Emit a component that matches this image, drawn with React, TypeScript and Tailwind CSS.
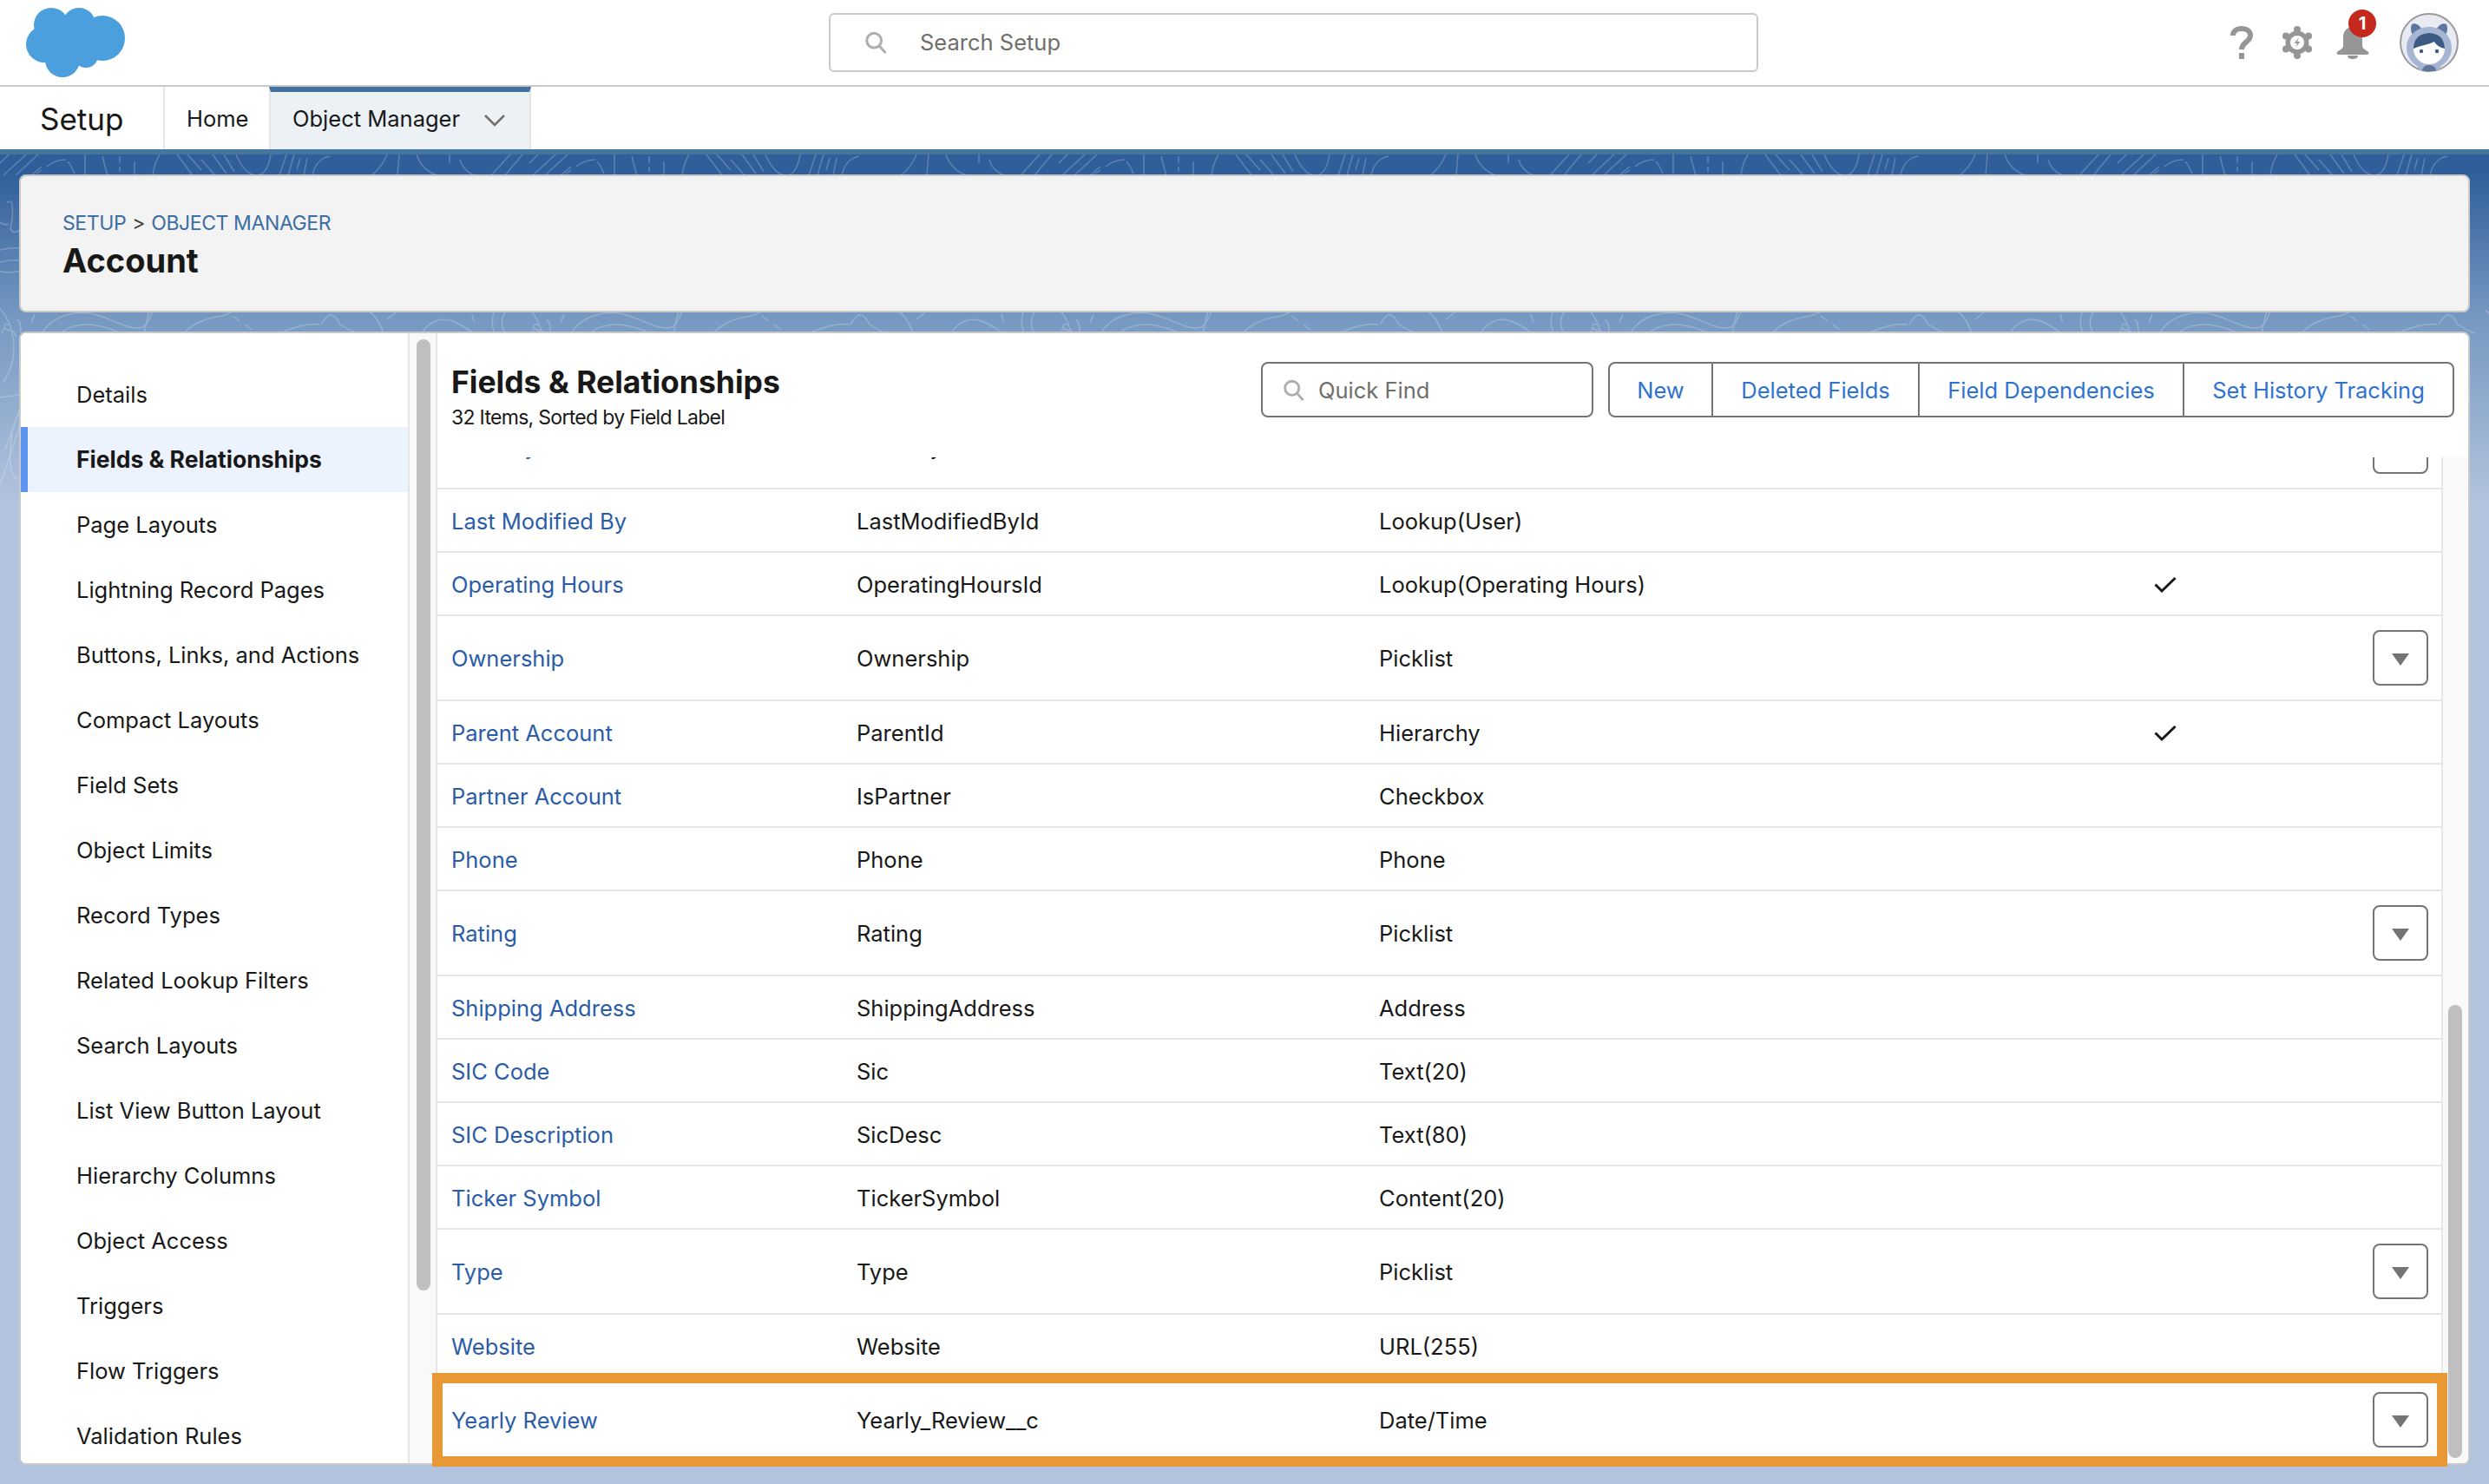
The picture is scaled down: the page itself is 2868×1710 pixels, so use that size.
import React from 'react';

const sideItems = [
  'Details',
  'Fields & Relationships',
  'Page Layouts',
  'Lightning Record Pages',
  'Buttons, Links, and Actions',
  'Compact Layouts',
  'Field Sets',
  'Object Limits',
  'Record Types',
  'Related Lookup Filters',
  'Search Layouts',
  'List View Button Layout',
  'Hierarchy Columns',
  'Object Access',
  'Triggers',
  'Flow Triggers',
  'Validation Rules',
];

type Row = { label: string; api: string; type: string; check?: boolean; menu?: boolean };

const rows: Row[] = [
  { label: 'Last Modified By', api: 'LastModifiedById', type: 'Lookup(User)' },
  { label: 'Operating Hours', api: 'OperatingHoursId', type: 'Lookup(Operating Hours)', check: true },
  { label: 'Ownership', api: 'Ownership', type: 'Picklist', menu: true },
  { label: 'Parent Account', api: 'ParentId', type: 'Hierarchy', check: true },
  { label: 'Partner Account', api: 'IsPartner', type: 'Checkbox' },
  { label: 'Phone', api: 'Phone', type: 'Phone' },
  { label: 'Rating', api: 'Rating', type: 'Picklist', menu: true },
  { label: 'Shipping Address', api: 'ShippingAddress', type: 'Address' },
  { label: 'SIC Code', api: 'Sic', type: 'Text(20)' },
  { label: 'SIC Description', api: 'SicDesc', type: 'Text(80)' },
  { label: 'Ticker Symbol', api: 'TickerSymbol', type: 'Content(20)' },
  { label: 'Type', api: 'Type', type: 'Picklist', menu: true },
  { label: 'Website', api: 'Website', type: 'URL(255)' },
  { label: 'Yearly Review', api: 'Yearly_Review__c', type: 'Date/Time', menu: true },
];

const SearchGlyph = ({ className }: { className: string }) => (
  <svg viewBox="0 0 28 28" className={className} fill="none" stroke="#b0adab" strokeWidth="3.2">
    <circle cx="12" cy="11.5" r="9" />
    <path d="M18.5 18l7 8" strokeLinecap="round" />
  </svg>
);

const MenuButton = () => (
  <div className="w-[64px] h-[64px] rounded-[8px] border-2 border-[#747474] bg-white flex items-center justify-center pt-[3px]">
    <svg viewBox="0 0 20 14" className="w-[20px] h-[14px]">
      <path d="M0 0h20L10 14z" fill="#747474" />
    </svg>
  </div>
);

const TableRow = ({ row, className = '' }: { row: Row; className?: string }) => (
  <div className={`flex items-center shrink-0 border-b-2 border-[#e5e5e5] pl-[16px] ${row.menu ? 'h-[98px]' : 'h-[73px]'} ${className}`}>
    <div className="w-[467px] pt-[3px] text-[#2a5ca8]">{row.label}</div>
    <div className="w-[602px] pt-[3px]">{row.api}</div>
    <div className="w-[893px] pt-[3px]">{row.type}</div>
    <div className="w-[252px]">
      {row.check && (
        <svg viewBox="0 0 26 20" className="w-[26px] h-[20px] mt-[3px]" fill="none" stroke="#181818" strokeWidth="3">
          <path d="M1.500 9.500l7.500 7.500L24.500 2" />
        </svg>
      )}
    </div>
    {row.menu && <MenuButton />}
  </div>
);

// contour lines behind the cards, they only show in the top part of the page
const Backdrop = () => (
  <svg className="absolute inset-0 w-full h-full">
    <defs>
      <pattern id="contour" width="610" height="430" patternUnits="userSpaceOnUse">
        <g fill="none" stroke="#ffffff" strokeOpacity="0.22" strokeWidth="1.5">
          <path d="M4 24L30 0M18 24L44 0M0 10L10 0M36 24L48 14" />
          <path d="M42 22l6-4M54 14c6-5 14-8 22-8M78 8c4 4 6 10 8 14" />
          <path d="M98 0v24M118 2c2 8 4 16 6 22M138 2v8M138 14v6M155 8v16M176 24c1-8 3-16 8-24" />
          <path d="M204 0l18 24M216 0l16 18M232 6l16 18M245 0l16 22M258 0l12 20" />
          <path d="M272 0c6 14 14 24 24 24s14-12 16-24" />
          <path d="M322 24l8-24M332 24l7-24M342 18l4-14M350 24l4-20" />
          <path d="M360 24c2-10 8-20 20-22" />
          <path d="M428 24c8-6 14-14 18-24M458 24l2-24M480 0c4 12 12 20 24 24M518 0v10M530 6c2 8 8 14 16 18M566 24l22-24M582 24l20-24" />
          <path d="M8 56c10-10 6 22 4 30 4 6 10 4 16-6M-4 76c6 4 10 6 14 4M0 110c14-3 26-3 40 0M0 124c14-3 26-3 40 0M-2 134c14 6 30-4 42 2" />
          <path d="M-6 172c24 20 30 60 10 90M6 200c4 6 10-2 12 10M-2 280c14-2 26-2 40-6M6 340l18-50M0 380l24-70M14 320c-4 30-4 50 6 54" />
          <path d="M48 206c14-22 40-26 60-22 20 4 44 22 58 14 6-6 8-12 10-18M70 206c10-10 30-12 46-8 10 2 18 6 24 8M166 206c2-10 4-18 6-26" />
          <path d="M212 206c12-14 30-18 44-20 6-2 10-4 14-6M268 186l8 6M282 196l8 6M322 206c16-6 30-12 46-10M370 196c8-14 14-16 22 0M392 196c6 4 14 8 20 10" />
          <path d="M424 180c10 6 14 16 18 26M446 190l10-8M462 182l6-4M486 206c8-14 24-20 40-12 8 4 14 8 20 12M544 184c2 6 0 8 4 8M570 206c-4-10-4-18 0-26M582 206c-6-10-4-20 2-26" />
          <path d="M2 206c6-8 0-12 8-10M20 190c4 4 4 8 4 16M40 184l-4 10" />
        </g>
      </pattern>
    </defs>
    <rect width="100%" height="430" fill="url(#contour)" />
  </svg>
);

const Avatar = () => (
  <svg viewBox="0 0 68 68" className="w-[68px] h-[68px]">
    <circle cx="34" cy="34" r="33" fill="#e8ebf2" stroke="#9a9a9a" strokeWidth="2" />
    <path d="M14 13c4-2 9 1 11 5l-8 10c-4-4-5-11-3-15zM54 13c-4-2-9 1-11 5l8 10c4-4 5-11 3-15z" fill="#5f769e" />
    <path d="M8 40c0-14 12-24 26-24s26 10 26 24c0 9-5 17-12 21l-4 6H24l-4-6C13 57 8 49 8 40z" fill="#a6b6d2" />
    <circle cx="34" cy="41" r="18" fill="#ffffff" />
    <path d="M16 41c0-12 8-18 18-18s18 6 18 18c-5-1-10-4-12-8-5 3-15 4-24 8z" fill="#3d5a85" />
    <circle cx="25" cy="44" r="2.200" fill="#3d5a85" />
    <circle cx="43" cy="44" r="2.200" fill="#3d5a85" />
    <path d="M26 67c0-5 4-7 8-7s8 2 8 7z" fill="#5f769e" />
  </svg>
);

export default function App() {
  return (
    <div className="w-[2868px] h-[1710px] overflow-hidden flex flex-col bg-white text-[#181818] text-[25.5px] relative font-['Inter',sans-serif]">
      <header className="h-[100px] shrink-0 border-b-2 border-[#c9c9c9] flex items-center relative">
        <svg viewBox="0 0 114 80" className="w-[114px] h-[80px] ml-[30px]" fill="#4a9fdc">
          <circle cx="29" cy="20" r="20" />
          <circle cx="61" cy="19" r="19" />
          <circle cx="88" cy="35" r="26" />
          <circle cx="21" cy="42" r="21" />
          <circle cx="42" cy="60" r="20" />
          <circle cx="69" cy="55" r="14" />
          <rect x="25" y="18" width="50" height="40" />
        </svg>
        <div className="ml-[811px] w-[1071px] h-[68px] rounded-[6px] border-2 border-[#c9c9c9] flex items-center pl-[38px]">
          <SearchGlyph className="w-[28px] h-[26px]" />
          <span className="ml-[37px] text-[#706e6b]">Search Setup</span>
        </div>
        <div className="ml-auto flex items-center pr-[35px]">
          <svg viewBox="0 0 26 38" className="w-[26px] h-[38px]" fill="none">
            <path d="M3 11c0-5 4-8 10-8s10 3 10 8c0 7-10 8-10 16" stroke="#969696" strokeWidth="6" />
            <rect x="10" y="31" width="6" height="7" fill="#969696" />
          </svg>
          <svg viewBox="0 0 34 38" className="w-[34px] h-[38px] ml-[34px]" fill="#969696">
            <circle cx="17" cy="19" r="13.500" />
            <circle cx="17" cy="4" r="4" />
            <circle cx="17" cy="34" r="4" />
            <circle cx="4" cy="11.500" r="4" />
            <circle cx="30" cy="11.500" r="4" />
            <circle cx="4" cy="26.500" r="4" />
            <circle cx="30" cy="26.500" r="4" />
            <circle cx="17" cy="19" r="8" fill="#ffffff" />
            <path d="M19 13l-5.500 7h3.500l-2 5 5.500-7H17z" />
          </svg>
          <div className="relative ml-[28px] w-[38px] h-[38px]">
            <svg viewBox="0 0 38 38" className="w-[38px] h-[38px]" fill="#969696">
              <path d="M19 1c-7 0-11 5-11 12v10c0 2-2 4-6 6-2 1-2 4 1 4h32c3 0 3-3 1-4-4-2-6-4-6-6V13c0-7-4-12-11-12z" />
              <path d="M13 34h12c0 3-3 4-6 4s-6-1-6-4z" />
            </svg>
            <div className="absolute top-[-19px] left-[14px] w-[32px] h-[32px] rounded-full bg-[#c5281c] text-white text-[20px] font-bold flex items-center justify-center">1</div>
          </div>
          <div className="ml-[35px]">
            <Avatar />
          </div>
        </div>
      </header>

      <nav className="h-[72px] shrink-0 flex items-stretch">
        <div className="w-[190px] pl-[46px] pt-[2px] flex items-center text-[35px] border-r-2 border-[#e5e5e5]">Setup</div>
        <div className="w-[120px] pl-[25px] pt-[2px] flex items-center">Home</div>
        <div className="w-[302px] pl-[25px] pb-[3px] flex items-center bg-[#ecf1f5] border-t-[6px] border-t-[#43719d] border-x-2 border-x-[#e5e5e5]">
          <span>Object Manager</span>
          <svg viewBox="0 0 24 14" className="w-[24px] h-[14px] ml-[28px] mt-[2px]" fill="none" stroke="#706e6b" strokeWidth="2.500">
            <path d="M1 1l11 11L23 1" />
          </svg>
        </div>
      </nav>

      <main className="flex-1 min-h-0 relative border-t-[6px] border-[#43759f] bg-[linear-gradient(to_bottom,#2f5e9a_0px,#2f5e9a_20px,#7598c1_185px,#b2c3dd_400px)] px-[22px] pt-[23px]">
        <Backdrop />
        <section className="relative h-[159px] rounded-[8px] bg-[#f3f3f3] border-2 border-[#c9c9c9] pl-[48px] pt-[38px]">
          <div className="text-[23px] leading-[32px] tracking-[-0.4px] text-[#3a6ea5]">
            SETUP <span className="text-[#3e3e3c] mx-[1px]">&gt;</span> OBJECT MANAGER
          </div>
          <div className="text-[38px] leading-[50px] mt-[2px] font-bold">Account</div>
        </section>

        <section className="relative mt-[22px] h-[1306px] rounded-[8px] bg-white border-2 border-[#c9c9c9] flex overflow-hidden">
          <aside className="w-[480px] shrink-0 relative border-r-2 border-[#e5e5e5] bg-[#f9f9f9]">
            <div className="w-[448px] h-full bg-white pt-[33px] border-r-2 border-[#e5e5e5]">
              {sideItems.map((item, i) => (
                <div
                  key={item}
                  className={i === 1
                    ? 'h-[75px] flex items-center pl-[56px] pt-[1px] bg-[#ecf3fe] font-bold text-[26.5px] border-l-[8px] border-[#5c94f0]'
                    : 'h-[75px] flex items-center pl-[64px] pt-[2px]'}
                >
                  {item}
                </div>
              ))}
            </div>
            <div className="absolute left-[456px] top-[7px] w-[16px] h-[1096px] rounded-full bg-[#bfbfbf]" />
          </aside>

          <div className="flex-1 min-w-0 flex flex-col">
            <div className="h-[143px] shrink-0 flex pl-[16px] pt-[33px] pr-[16px] relative">
              <div>
                <div className="text-[35.5px] leading-[44px] pt-[2px] font-bold">Fields &amp; Relationships</div>
                <div className="text-[23px] leading-[30px] mt-[3px] tracking-[-0.7px]">32 Items, Sorted by Field Label</div>
              </div>
              <div className="ml-auto flex h-[64px]">
                <div className="w-[383px] h-full rounded-[8px] border-2 border-[#747474] flex items-center pl-[22px]">
                  <SearchGlyph className="w-[27px] h-[25px]" />
                  <span className="ml-[15px] pt-[2px] text-[#706e6b]">Quick Find</span>
                </div>
                <div className="ml-[17px] flex h-full rounded-[8px] border-2 border-[#747474] text-[#2e72d2]">
                  <div className="w-[117px] pt-[2px] flex items-center justify-center">New</div>
                  <div className="w-[238px] pt-[2px] flex items-center justify-center border-l-2 border-[#747474]">Deleted Fields</div>
                  <div className="w-[305px] pt-[2px] flex items-center justify-center border-l-2 border-[#747474]">Field Dependencies</div>
                  <div className="w-[311px] pt-[2px] flex items-center justify-center border-l-2 border-[#747474]">Set History Tracking</div>
                </div>
              </div>
            </div>
            <div className="flex-1 min-h-0 flex">
              <div className="flex-1 min-w-0 overflow-hidden">
                <TableRow row={{ label: 'Industry', api: 'Industry', type: 'Picklist', menu: true }} className="-mt-[61px]" />
                {rows.map((row) => (
                  <TableRow key={row.label} row={row} />
                ))}
              </div>
              <div className="w-[31px] shrink-0 bg-[#f9f9f9] border-l-2 border-[#e8e8e8] pl-[6px] pt-[631px]">
                <div className="w-[16px] h-[522px] rounded-full bg-[#bfbfbf]" />
              </div>
            </div>
          </div>
        </section>
      </main>

      <div className="absolute left-[498px] top-[1582px] w-[2322px] h-[108px] border-[12px] border-[#e89835]" />
    </div>
  );
}
